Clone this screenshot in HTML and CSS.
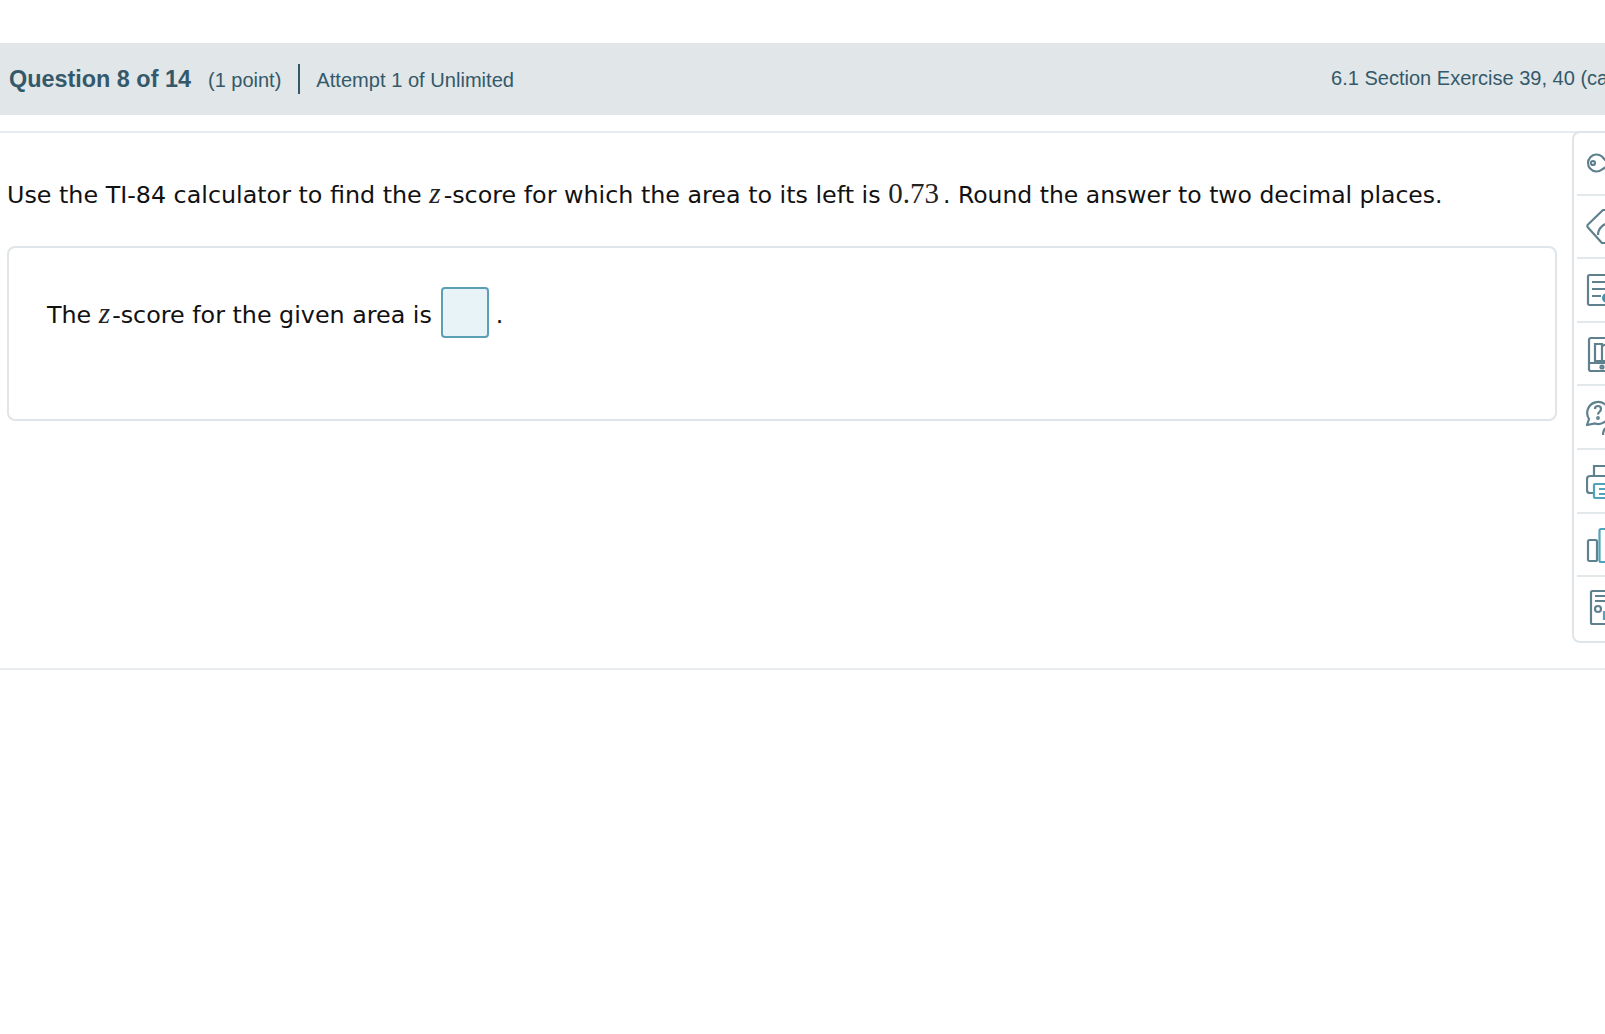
FILE: index.html
```html
<!DOCTYPE html>
<html lang="en">
<head>
<meta charset="utf-8">
<title>Question 8 of 14</title>
<link rel="stylesheet" href="styles.css">
</head>
<body>
<header class="qbar">
  <div class="qbar-left">
    <strong class="qnum">Question 8 of 14</strong>
    <span class="points">(1 point)</span>
    <span class="attempt">Attempt 1 of Unlimited</span>
  </div>
  <div class="qbar-right">6.1 Section Exercise 39, 40 (calculator)</div>
</header>
<div class="content">
  <main class="question">
    <p class="prompt">Use the TI-84 calculator to find the <i class="math var">z</i>-score for which the area to its left is <span class="math num">0.73</span><span class="tail">. Round the answer to two decimal places.</span></p>
    <section class="card">
      <span class="answer-text">The <i class="math var">z</i>-score for the given area is</span>
      <span class="answer"></span>
      <span class="answer-text">.</span>
    </section>
  </main>
  <nav class="tools">
    <div class="tool"><svg class="icon" viewBox="0 0 40 40"><path d="M16 13.500A8.500 8.500 0 1 0 16 26.500L20 24h4l2 2 2-2 2 2 4-6-2-3H19z" class="st"/><circle cx="7" cy="20" r="2" class="st"/></svg></div>
    <div class="tool"><svg class="icon" viewBox="0 0 40 40"><path d="M17 4 2 18.500a2 2 0 0 0 0 3L15 36a2 2 0 0 0 2 1h22V4z" class="st"/><path d="M12 29c0-7 6-12 13-12" class="st"/></svg></div>
    <div class="tool"><svg class="icon" viewBox="0 0 40 40"><rect x="2" y="5" width="36" height="30" rx="1.500" class="st"/><path d="M6 12h24M6 19h24M6 26h9" class="st"/><circle cx="21" cy="28" r="5" class="fill"/></svg></div>
    <div class="tool"><svg class="icon" viewBox="0 0 40 40"><rect x="3" y="4" width="36" height="33" rx="2" class="st"/><path d="M9 10h7v17H9zM16 12l8-3v18h-8M3 29h36" class="st"/><circle cx="16" cy="33" r="1.500" class="st"/></svg></div>
    <div class="tool"><svg class="icon" viewBox="0 0 40 40"><path d="M3 22a11 11 0 1 1 6 4.500L1 28z" class="st"/><path d="M9 12c0-4 6-4 6 0 0 3-3 3-3 5.500" class="st"/><circle cx="12" cy="21" r=".8" class="st"/><path d="M17 38c0-6 3-8 7-8" class="st"/></svg></div>
    <div class="tool"><svg class="icon" viewBox="0 0 40 40"><path d="M8 15V5h30M7 32H4a3 3 0 0 1-3-3V18a3 3 0 0 1 3-3h34" class="st"/><rect x="8" y="23" width="32" height="14" rx="1" class="ac"/><path d="M13 28h24M13 33h24" class="ac"/></svg></div>
    <div class="tool"><svg class="icon" viewBox="0 0 40 40"><rect x="2" y="16" width="9" height="21" rx="1.500" class="st"/><rect x="13.500" y="5" width="24" height="33" rx="1.500" class="ac"/></svg></div>
    <div class="tool"><svg class="icon" viewBox="0 0 40 40"><rect x="5" y="3" width="34" height="33" rx="1.500" class="st"/><path d="M9 8h26M9 13h26" class="st"/><circle cx="12" cy="21" r="3" class="st"/><path d="M18 32v-8h12v8" class="ac"/></svg></div>
  </nav>
</div>
</body>
</html>
```
FILE: styles.css
```css
html, body {
  margin: 0;
  height: 100%;
  overflow: hidden;
  background: #fff;
}
body {
  padding-top: 43px;
  box-sizing: border-box;
  width: 1605px;
  font-family: "DejaVu Sans", sans-serif;
  color: #111;
}
.qbar {
  height: 72px;
  background: #e1e6e8;
  color: #34596a;
  font-family: "Liberation Sans", Arial, sans-serif;
  display: flex;
  justify-content: space-between;
  white-space: nowrap;
  overflow: hidden;
}
.qbar-left {
  display: flex;
  align-items: center;
  padding-left: 9px;
  font-size: 20px;
}
.qnum {
  font-size: 23.4px;
  margin-right: 17px;
}
.points {
  position: relative;
  top: 1px;
}
.attempt {
  margin-left: 17px;
  padding-left: 16px;
  border-left: 2px solid #34596a;
  line-height: 30px;
  padding-top: 1px;
  height: 29px;
  font-size: 20.1px;
}
.qbar-right {
  width: 274px;
  font-size: 20.05px;
  padding-top: 24px;
  overflow: hidden;
}
.content {
  margin-top: 16px;
  border-top: 2px solid #e8ecee;
  border-bottom: 2px solid #e8ecee;
  height: 535px;
  display: flex;
  justify-content: space-between;
}
.question {
  width: 1550px;
  padding-left: 7px;
}
.prompt {
  margin: 0;
  padding-top: 47px;
  font-size: 23.8px;
  line-height: 30px;
  white-space: nowrap;
}
.math {
  font-family: "Liberation Serif", "Times New Roman", serif;
  font-size: 29px;
  color: #222;
  line-height: 20px;
}
.var {
  margin-right: 3px;
}
.num {
  margin-right: 4px;
}
.tail {
  font-size: 23.5px;
}
.card {
  margin-top: 36px;
  height: 175px;
  box-sizing: border-box;
  border: 2px solid #dfe5e8;
  border-radius: 8px;
  padding: 39px 0 0 38px;
  font-size: 23.8px;
  display: flex;
  align-items: flex-start;
  white-space: pre-wrap;
}
.card .var {
  margin-right: 2px;
}
.answer-text {
  line-height: 56px;
}
.answer {
  width: 44px;
  height: 47px;
  margin: 0 7px 0 9px;
  border: 2px solid #5b9fb5;
  border-radius: 4px;
  background: #e8f3f8;
}
.tools {
  width: 33px;
  height: 512px;
  box-sizing: border-box;
  border: 2px solid #dfe5e8;
  border-right: 0;
  border-radius: 8px 0 0 8px;
  margin-top: -2px;
  padding-left: 3px;
  overflow: hidden;
  flex: none;
}
.tool {
  height: 61.6px;
  border-bottom: 2px solid #e3e8ea;
  width: 60px;
  display: flex;
  align-items: center;
}
.tool:first-child {
  height: 60.6px;
}
.tool:last-child {
  border-bottom: 0;
}
.icon {
  width: 40px;
  height: 40px;
  margin-left: 9px;
  flex: none;
}
.st, .ac {
  fill: none;
  stroke-width: 2.2;
}
.st { stroke: #5f818e; }
.ac { stroke: #4fa3bd; }
.fill { fill: #3f94b0; }
```
